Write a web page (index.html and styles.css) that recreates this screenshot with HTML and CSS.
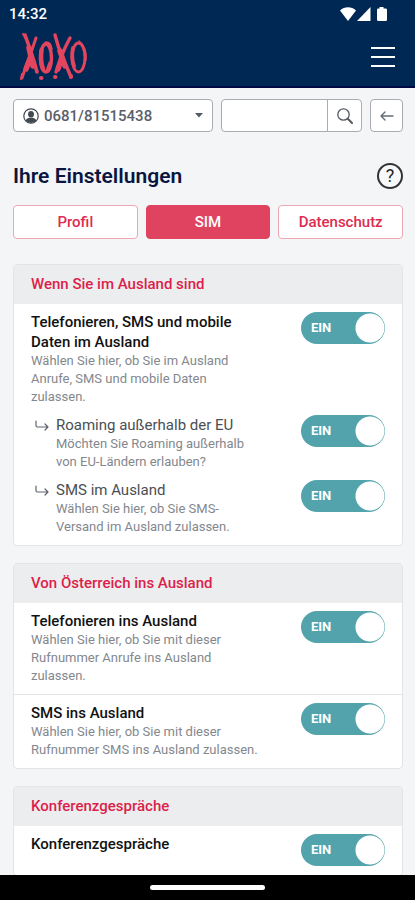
FILE: index.html
```html
<!DOCTYPE html>
<html lang="de">
<head>
<meta charset="utf-8">
<meta name="viewport" content="width=device-width, initial-scale=1">
<title>Ihre Einstellungen</title>
<link rel="stylesheet" href="styles.css">
</head>
<body>
<header class="top">
  <div class="status">
    <span class="clock">14:32</span>
    <svg class="status-icons" width="48" height="15" viewBox="0 0 48 15" fill="#fff" aria-hidden="true">
      <path d="M0 3.500C4.500-.7 11.500-.7 16 3.500L8 14Z"/>
      <path d="M30.500 0V14H17Z"/>
      <path d="M39.500 0h4v1.500h2.200q1.300 0 1.300 1.300v10q0 1.200-1.300 1.200h-7.400q-1.300 0-1.300-1.200v-10q0-1.300 1.300-1.300h1.200Z"/>
    </svg>
  </div>
  <div class="brand-bar">
    <a class="logo" href="#" aria-label="XOXO">
      <svg width="68" height="50" viewBox="0 0 68 50" fill="none" stroke="#e3455e" stroke-linecap="round" aria-hidden="true">
        <path stroke-width="3.600" d="M5 3Q9 14 12 23T17 40"/>
        <path stroke-width="3" d="M16 6Q12 18 8 29T2 46"/>
        <path stroke-width="5.500" d="M9 16L13 34M11 24L6 37"/>
        <path stroke-width="2" d="M3 2L6 7M2 42L1 47M14 28L17 40"/>
        <ellipse stroke-width="3.400" cx="26" cy="26" rx="5.500" ry="14"/>
        <path stroke-width="4.500" d="M21.500 18Q20 29 23 37"/>
        <path stroke-width="3.500" d="M26 11Q30 11 31 17M30 31L27 39"/>
        <path stroke-width="3.400" d="M35 3Q38 15 42 24T51 45"/>
        <path stroke-width="3.400" d="M50 6Q44 17 41 26T36 40"/>
        <path stroke-width="5.500" d="M40 19L45 34M42 25L38 37"/>
        <path stroke-width="4" d="M35 45h.5M51 44v1M21 46h.5"/>
        <ellipse stroke-width="3" cx="58.500" cy="25.500" rx="6.500" ry="14.500"/>
        <path stroke-width="3.800" d="M53 16Q51 25 54 34"/>
        <path stroke-width="1.500" d="M59 9Q67 15 66 28"/>
      </svg>
    </a>
    <button class="menu" type="button" aria-label="Menü"><span></span><span></span><span></span></button>
  </div>
</header>

<main class="page">
  <form class="tools">
    <div class="number">
      <svg width="16" height="16" viewBox="0 0 16 16" aria-hidden="true">
        <circle cx="8" cy="8" r="7.200" fill="none" stroke="#414851" stroke-width="1.200"/>
        <ellipse cx="8" cy="6.200" rx="2.900" ry="3.300" fill="#414851"/>
        <path d="M2.500 12.200Q4 10 6.500 9.800h3Q12 10 13.500 12.200Q11.300 15 8 15T2.500 12.200Z" fill="#414851"/>
      </svg>
      <select class="number-select" aria-label="Rufnummer"><option>0681/81515438</option></select>
      <svg class="caret" width="8" height="5" viewBox="0 0 8 5" aria-hidden="true"><path d="M0 0h8L4 4.500Z" fill="#555b63"/></svg>
    </div>
    <div class="search">
      <input class="search-input" type="text" aria-label="Suche">
      <button class="search-button" type="button" aria-label="Suchen">
        <svg width="16" height="16" viewBox="0 0 16 16" fill="none" stroke="#555b63" aria-hidden="true"><circle cx="6.500" cy="6.500" r="5.700" stroke-width="1.300"/><path d="M10.800 10.800L15 15" stroke-width="2" stroke-linecap="round"/></svg>
      </button>
    </div>
    <button class="back" type="button" aria-label="Zurück">
      <svg width="14" height="10" viewBox="0 0 14 10" fill="none" stroke="#666c73" stroke-width="1.400" stroke-linecap="round" stroke-linejoin="round" aria-hidden="true"><path d="M13 5H1M5 1L1 5L5 9"/></svg>
    </button>
  </form>

  <div class="heading">
    <h1>Ihre Einstellungen</h1>
    <button class="help" type="button" aria-label="Hilfe">?</button>
  </div>

  <nav class="tabs">
    <a class="tab" href="#">Profil</a>
    <a class="tab active" href="#" aria-current="page">SIM</a>
    <a class="tab" href="#">Datenschutz</a>
  </nav>

  <section class="card">
    <h2>Wenn Sie im Ausland sind</h2>
    <div class="group">
      <div class="row">
        <div class="copy"><label class="title" for="s1">Telefonieren, SMS und mobile Daten im Ausland</label><p>Wählen Sie hier, ob Sie im Ausland Anrufe, SMS und mobile Daten zulassen.</p></div>
        <div class="switch"><input type="checkbox" role="switch" id="s1" checked><span aria-hidden="true">EIN</span></div>
      </div>
      <div class="row sub">
        <svg class="branch" width="14" height="11" viewBox="0 0 14 11" fill="none" stroke="#5d636a" stroke-width="1.200" stroke-linecap="round" stroke-linejoin="round" aria-hidden="true"><path d="M1 1V5.500Q1 7 2.500 7H13M10 4L13 7L10 10"/></svg>
        <div class="copy"><label class="title" for="s2">Roaming außerhalb der EU</label><p>Möchten Sie Roaming außerhalb von EU-Ländern erlauben?</p></div>
        <div class="switch"><input type="checkbox" role="switch" id="s2" checked><span aria-hidden="true">EIN</span></div>
      </div>
      <div class="row sub">
        <svg class="branch" width="14" height="11" viewBox="0 0 14 11" fill="none" stroke="#5d636a" stroke-width="1.200" stroke-linecap="round" stroke-linejoin="round" aria-hidden="true"><path d="M1 1V5.500Q1 7 2.500 7H13M10 4L13 7L10 10"/></svg>
        <div class="copy"><label class="title" for="s3">SMS im Ausland</label><p>Wählen Sie hier, ob Sie SMS-Versand im Ausland zulassen.</p></div>
        <div class="switch"><input type="checkbox" role="switch" id="s3" checked><span aria-hidden="true">EIN</span></div>
      </div>
    </div>
  </section>

  <section class="card">
    <h2>Von Österreich ins Ausland</h2>
    <div class="group">
      <div class="row">
        <div class="copy"><label class="title" for="s4">Telefonieren ins Ausland</label><p>Wählen Sie hier, ob Sie mit dieser Rufnummer Anrufe ins Ausland zulassen.</p></div>
        <div class="switch"><input type="checkbox" role="switch" id="s4" checked><span aria-hidden="true">EIN</span></div>
      </div>
    </div>
    <div class="group">
      <div class="row">
        <div class="copy"><label class="title" for="s5">SMS ins Ausland</label><p>Wählen Sie hier, ob Sie mit dieser Rufnummer SMS ins Ausland zulassen.</p></div>
        <div class="switch"><input type="checkbox" role="switch" id="s5" checked><span aria-hidden="true">EIN</span></div>
      </div>
    </div>
  </section>

  <section class="card">
    <h2>Konferenzgespräche</h2>
    <div class="group">
      <div class="row">
        <div class="copy"><label class="title" for="s6">Konferenzgespräche</label></div>
        <div class="switch"><input type="checkbox" role="switch" id="s6" checked><span aria-hidden="true">EIN</span></div>
      </div>
    </div>
  </section>
</main>

<footer class="system-bar"><span class="handle"></span></footer>
</body>
</html>
```
FILE: styles.css
```css
* { box-sizing: border-box; }

body {
  margin: 0;
  height: 100vh;
  display: flex;
  flex-direction: column;
  background: #f3f5f7;
  color: #111;
  font-family: Roboto, "Liberation Sans", sans-serif;
  font-size: 15px;
  line-height: 20px;
}

h1, h2, p { margin: 0; }
a { text-decoration: none; }
svg { display: block; flex: none; }
button, input, select { font: inherit; margin: 0; }

.top {
  flex: none;
  background: #002855;
  border-bottom: 2px solid #000b46;
  color: #fff;
}

.status {
  display: flex;
  align-items: center;
  justify-content: space-between;
  height: 28px;
  padding: 0 27px 0 9px;
}

.clock { font-size: 15px; font-weight: 500; }

.brand-bar {
  display: flex;
  align-items: flex-end;
  justify-content: space-between;
  padding: 4px 20px;
}

.menu {
  display: flex;
  flex-direction: column;
  gap: 7px;
  padding: 0 0 15px;
  border: 0;
  background: none;
}

.menu span {
  width: 24px;
  height: 2px;
  background: #fff;
}

.page {
  flex: 1;
  min-height: 0;
  overflow-y: auto;
  scrollbar-width: none;
  padding: 11px 12px 0 13px;
}

.tools { display: flex; gap: 8px; }

.number, .search, .back {
  height: 33px;
  border: 1px solid #a9adb2;
  border-radius: 4px;
  background: #fff;
}

.number {
  position: relative;
  display: flex;
  align-items: center;
  flex: 189 1 0;
  min-width: 0;
  gap: 5px;
  padding-left: 9px;
}

.number-select {
  flex: 1;
  min-width: 0;
  height: 31px;
  padding: 0;
  border: 0;
  background: none;
  color: #59606a;
  appearance: none;
  font-weight: 500;
}

.caret {
  position: absolute;
  right: 9px;
  pointer-events: none;
}

.search {
  display: flex;
  flex: 139 1 0;
  min-width: 0;
}

.search-input {
  flex: 1;
  width: 0;
  min-width: 0;
  padding: 0 8px;
  border: 0;
  background: none;
}

.search-button {
  display: grid;
  place-items: center;
  flex: none;
  width: 34px;
  padding: 0;
  border: 0;
  border-left: 1px solid #a9adb2;
  background: none;
}

.back {
  display: grid;
  place-items: center;
  flex: none;
  width: 33px;
  padding: 0;
}

.heading {
  display: flex;
  align-items: center;
  justify-content: space-between;
  margin-top: 31px;
}

h1 {
  color: #0b1540;
  font-size: 21px;
  font-weight: 600;
  line-height: 26px;
}

.help {
  width: 26px;
  height: 26px;
  padding: 0;
  border: 2px solid #333;
  border-radius: 50%;
  background: #f8f9fa;
  color: #222;
  font-size: 18px;
  line-height: 22px;
}

.tabs {
  display: grid;
  grid-template-columns: repeat(3, 1fr);
  gap: 8px;
  margin-top: 16px;
}

.tab {
  padding: 5px 0;
  border: 1px solid #eda6b2;
  border-radius: 4px;
  background: #fff;
  color: #dc2c50;
  font-weight: 500;
  line-height: 22px;
  text-align: center;
}

.tab.active {
  border-color: #df435f;
  background: #df435f;
  color: #fff;
}

.card {
  overflow: hidden;
  border: 1px solid #e2e4e6;
  border-radius: 4px;
  background: #fff;
}

.tabs + .card { margin-top: 25px; }
.card + .card { margin-top: 17px; }

h2 {
  padding: 9px 17px 10px;
  background: #ebedee;
  color: #dc1f4b;
  font-size: 15px;
  font-weight: 500;
  line-height: 20px;
}

.group {
  display: grid;
  gap: 9px;
  padding: 8px 17px 9px;
}

.group + .group { border-top: 1px solid #e2e4e6; }

.row {
  display: flex;
  align-items: flex-start;
}

.copy { flex: 1; padding-right: 40px; }

.title {
  display: block;
  font-weight: 500;
}

.copy p {
  color: #83888e;
  font-size: 13px;
  line-height: 18px;
}

.sub .title {
  color: #4a4f55;
  font-weight: 400;
}

.branch { margin: 5px 7px 0 4px; }

.switch { position: relative; flex: none; }

.switch input {
  display: block;
  width: 84px;
  height: 32px;
  appearance: none;
  border-radius: 16px;
  background: radial-gradient(circle at 69px 16px, #fff 14px, #52a3ab 15px);
}

.switch span {
  position: absolute;
  left: 10px;
  top: 6px;
  color: #fff;
  font-size: 13px;
  font-weight: 700;
  pointer-events: none;
}

.system-bar {
  display: flex;
  flex: none;
  align-items: center;
  justify-content: center;
  height: 25px;
  background: #000;
}

.handle {
  width: 115px;
  height: 5px;
  border-radius: 3px;
  background: #fff;
}
```
